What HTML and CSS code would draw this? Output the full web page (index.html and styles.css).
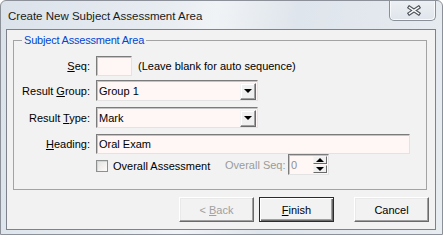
FILE: index.html
```html
<!DOCTYPE html>
<html>
<head>
<meta charset="utf-8">
<link rel="stylesheet" href="styles.css">
</head>
<body>
<div class="window">
  <div class="titlebar">
    <span class="title">Create New Subject Assessment Area</span>
    <div class="close">
      <svg width="14" height="11" viewBox="0 0 14 11">
        <path d="M2.5 2.5 L11.5 8.5 M11.5 2.5 L2.5 8.5" stroke="#50555d" stroke-width="3.8" stroke-linecap="square" fill="none"/>
        <path d="M2.5 2.5 L11.5 8.5 M11.5 2.5 L2.5 8.5" stroke="#ffffff" stroke-width="1.5" stroke-linecap="square" fill="none"/>
      </svg>
    </div>
  </div>
  <div class="client">
    <fieldset class="group">
      <legend>Subject Assessment Area</legend>
      <div class="row r-seq">
        <span class="lbl"><u>S</u>eq:</span>
        <div class="field f-seq"></div>
        <span class="hint">(Leave blank for auto sequence)</span>
      </div>
      <div class="row r-group">
        <span class="lbl">Result <u>G</u>roup:</span>
        <div class="field combo"><span class="val">Group 1</span><span class="drop"><i class="tri-down"></i></span></div>
      </div>
      <div class="row r-type">
        <span class="lbl">Result <u>T</u>ype:</span>
        <div class="field combo"><span class="val">Mark</span><span class="drop"><i class="tri-down"></i></span></div>
      </div>
      <div class="row r-heading">
        <span class="lbl"><u>H</u>eading:</span>
        <div class="field f-heading"><span class="val">Oral Exam</span></div>
      </div>
      <div class="row r-overall">
        <span class="lbl"></span>
        <div class="check-wrap">
          <span class="checkbox"></span>
          <span class="check-label">Overall Assessment</span>
        </div>
        <span class="seq-label">Overall Seq:</span>
        <div class="field spinner">
          <span class="val disabled">0</span>
          <span class="spin">
            <span class="spin-btn"><i class="tri-up"></i></span>
            <span class="spin-btn"><i class="tri-down"></i></span>
          </span>
        </div>
      </div>
    </fieldset>
    <div class="buttons">
      <div class="btn disabled"><span>&lt; <u>B</u>ack</span></div>
      <div class="btn default"><span><u>F</u>inish</span></div>
      <div class="btn cancel"><span>Cancel</span></div>
    </div>
  </div>
</div>
</body>
</html>
```

FILE: styles.css
```css
body {
  margin: 0;
  background: #ffffff;
}

.window {
  width: 443px;
  height: 235px;
  box-sizing: border-box;
  border: 1px solid #8c9199;
  border-radius: 6px 6px 0 0;
  background: linear-gradient(100deg, #dbe2ea 0%, #e8edf2 35%, #f0f3f6 45%, #dfe5ec 62%, #e7ecf1 100%);
  display: flex;
  flex-direction: column;
  font-family: "Liberation Sans", Arial, sans-serif;
  font-size: 11px;
  color: #000;
  overflow: hidden;
}

.titlebar {
  height: 28px;
  display: flex;
  align-items: flex-start;
  padding: 0 6px 0 7px;
  flex: none;
}

.title {
  margin-top: 8px;
  line-height: 14px;
  font-size: 11.5px;
  color: #1b1b1b;
  white-space: nowrap;
}

.close {
  margin-left: auto;
  margin-top: -1px;
  width: 47px;
  height: 21px;
  box-sizing: border-box;
  border: 1px solid #8a9098;
  border-top: none;
  border-radius: 0 0 5px 5px;
  background: linear-gradient(#edf0f4, #dfe5ec);
  box-shadow: inset 1px 0 0 #f7f9fb, inset -1px -1px 0 #f7f9fb;
  display: flex;
  align-items: center;
  justify-content: center;
  padding: 1px 0 0 3px;
}

.client {
  margin: 0 6px 0 5px;
  height: 201px;
  box-sizing: border-box;
  border: 1px solid #7e838b;
  background: #f2f2f2;
  display: flex;
  flex-direction: column;
  flex: none;
}

.group {
  margin: 3px 8px 0 6px;
  padding: 9px 8px 14px 8px;
  border: 1px solid #a3a3a3;
  min-width: 0;
}

.group legend {
  padding: 0 2px;
  line-height: 14px;
  color: #0046d5;
  font-size: 11px;
  letter-spacing: -0.2px;
}

.row {
  display: flex;
  align-items: center;
}

.lbl {
  width: 68px;
  margin-right: 6px;
  text-align: right;
  white-space: nowrap;
  flex: none;
}

.r-seq { height: 20px; }
.r-group { height: 21px; margin-top: 4px; }
.r-type { height: 21px; margin-top: 6px; }
.r-heading { height: 20px; margin-top: 6px; }
.r-overall { height: 21px; }

.field {
  box-sizing: border-box;
  height: 100%;
  border: 1px solid;
  border-color: #7b7b7b #e3e3e3 #e3e3e3 #7b7b7b;
  box-shadow: inset 1px 1px 0 #c4c4c4;
  background: #fff6f6;
  display: flex;
  align-items: center;
  flex: none;
}

.val {
  padding-left: 2px;
  flex: 1;
  white-space: nowrap;
}

.val.disabled {
  color: #8f8f8f;
}

.f-seq { width: 36px; }

.hint {
  margin-left: 6px;
  white-space: nowrap;
}

.combo { width: 162px; }

.f-heading { width: 314px; }

.drop {
  width: 16px;
  height: 17px;
  margin-right: 1px;
  margin-top: 1px;
  box-sizing: border-box;
  border: 1px solid;
  border-color: #f4f4f4 #6a6a6a #6a6a6a #f4f4f4;
  box-shadow: inset -1px -1px 0 #a0a0a0, inset 1px 1px 0 #ffffff;
  background: #f0f0f0;
  display: flex;
  align-items: center;
  justify-content: center;
}

.tri-down {
  width: 0;
  height: 0;
  border-left: 4px solid transparent;
  border-right: 4px solid transparent;
  border-top: 4px solid #000;
}

.tri-up {
  width: 0;
  height: 0;
  border-left: 4px solid transparent;
  border-right: 4px solid transparent;
  border-bottom: 4px solid #000;
}

.check-wrap {
  width: 129px;
  display: flex;
  align-items: center;
  flex: none;
  padding-top: 2px;
}

.checkbox {
  width: 12px;
  height: 12px;
  box-sizing: border-box;
  border: 1px solid #8e8f8f;
  background: linear-gradient(135deg, #e4e1e1, #fdfafa);
  box-shadow: inset 1px 1px 0 #d8d4d4;
  margin-right: 5px;
  flex: none;
}

.check-label {
  white-space: nowrap;
}

.seq-label {
  color: #9b9b9b;
  width: 63px;
  white-space: nowrap;
  flex: none;
}

.spinner {
  width: 41px;
}

.spin {
  display: flex;
  flex-direction: column;
  width: 14px;
  height: 17px;
  margin-right: 1px;
  gap: 1px;
}

.spin-btn {
  flex: 1;
  box-sizing: border-box;
  border: 1px solid;
  border-color: #f4f4f4 #6a6a6a #6a6a6a #f4f4f4;
  background: #f0f0f0;
  display: flex;
  align-items: center;
  justify-content: center;
}

.buttons {
  display: flex;
  justify-content: flex-end;
  margin-top: 7px;
  padding-right: 6px;
}

.btn {
  width: 75px;
  height: 25px;
  box-sizing: border-box;
  border: 1px solid;
  border-color: #ffffff #6a6a6a #6a6a6a #ffffff;
  box-shadow: inset -1px -1px 0 #a0a0a0, inset 1px 1px 0 #e9e9e9;
  background: #f2f2f2;
  display: flex;
  align-items: center;
  justify-content: center;
  line-height: 14px;
  white-space: nowrap;
}

.btn.disabled {
  color: #a0a0a0;
  margin-right: 5px;
}

.btn.default {
  border: 1px solid #2b2b2b;
  box-shadow: inset 1px 1px 0 #ffffff, inset -1px -1px 0 #6a6a6a, inset -2px -2px 0 #a0a0a0;
  margin-right: 20px;
}
```
